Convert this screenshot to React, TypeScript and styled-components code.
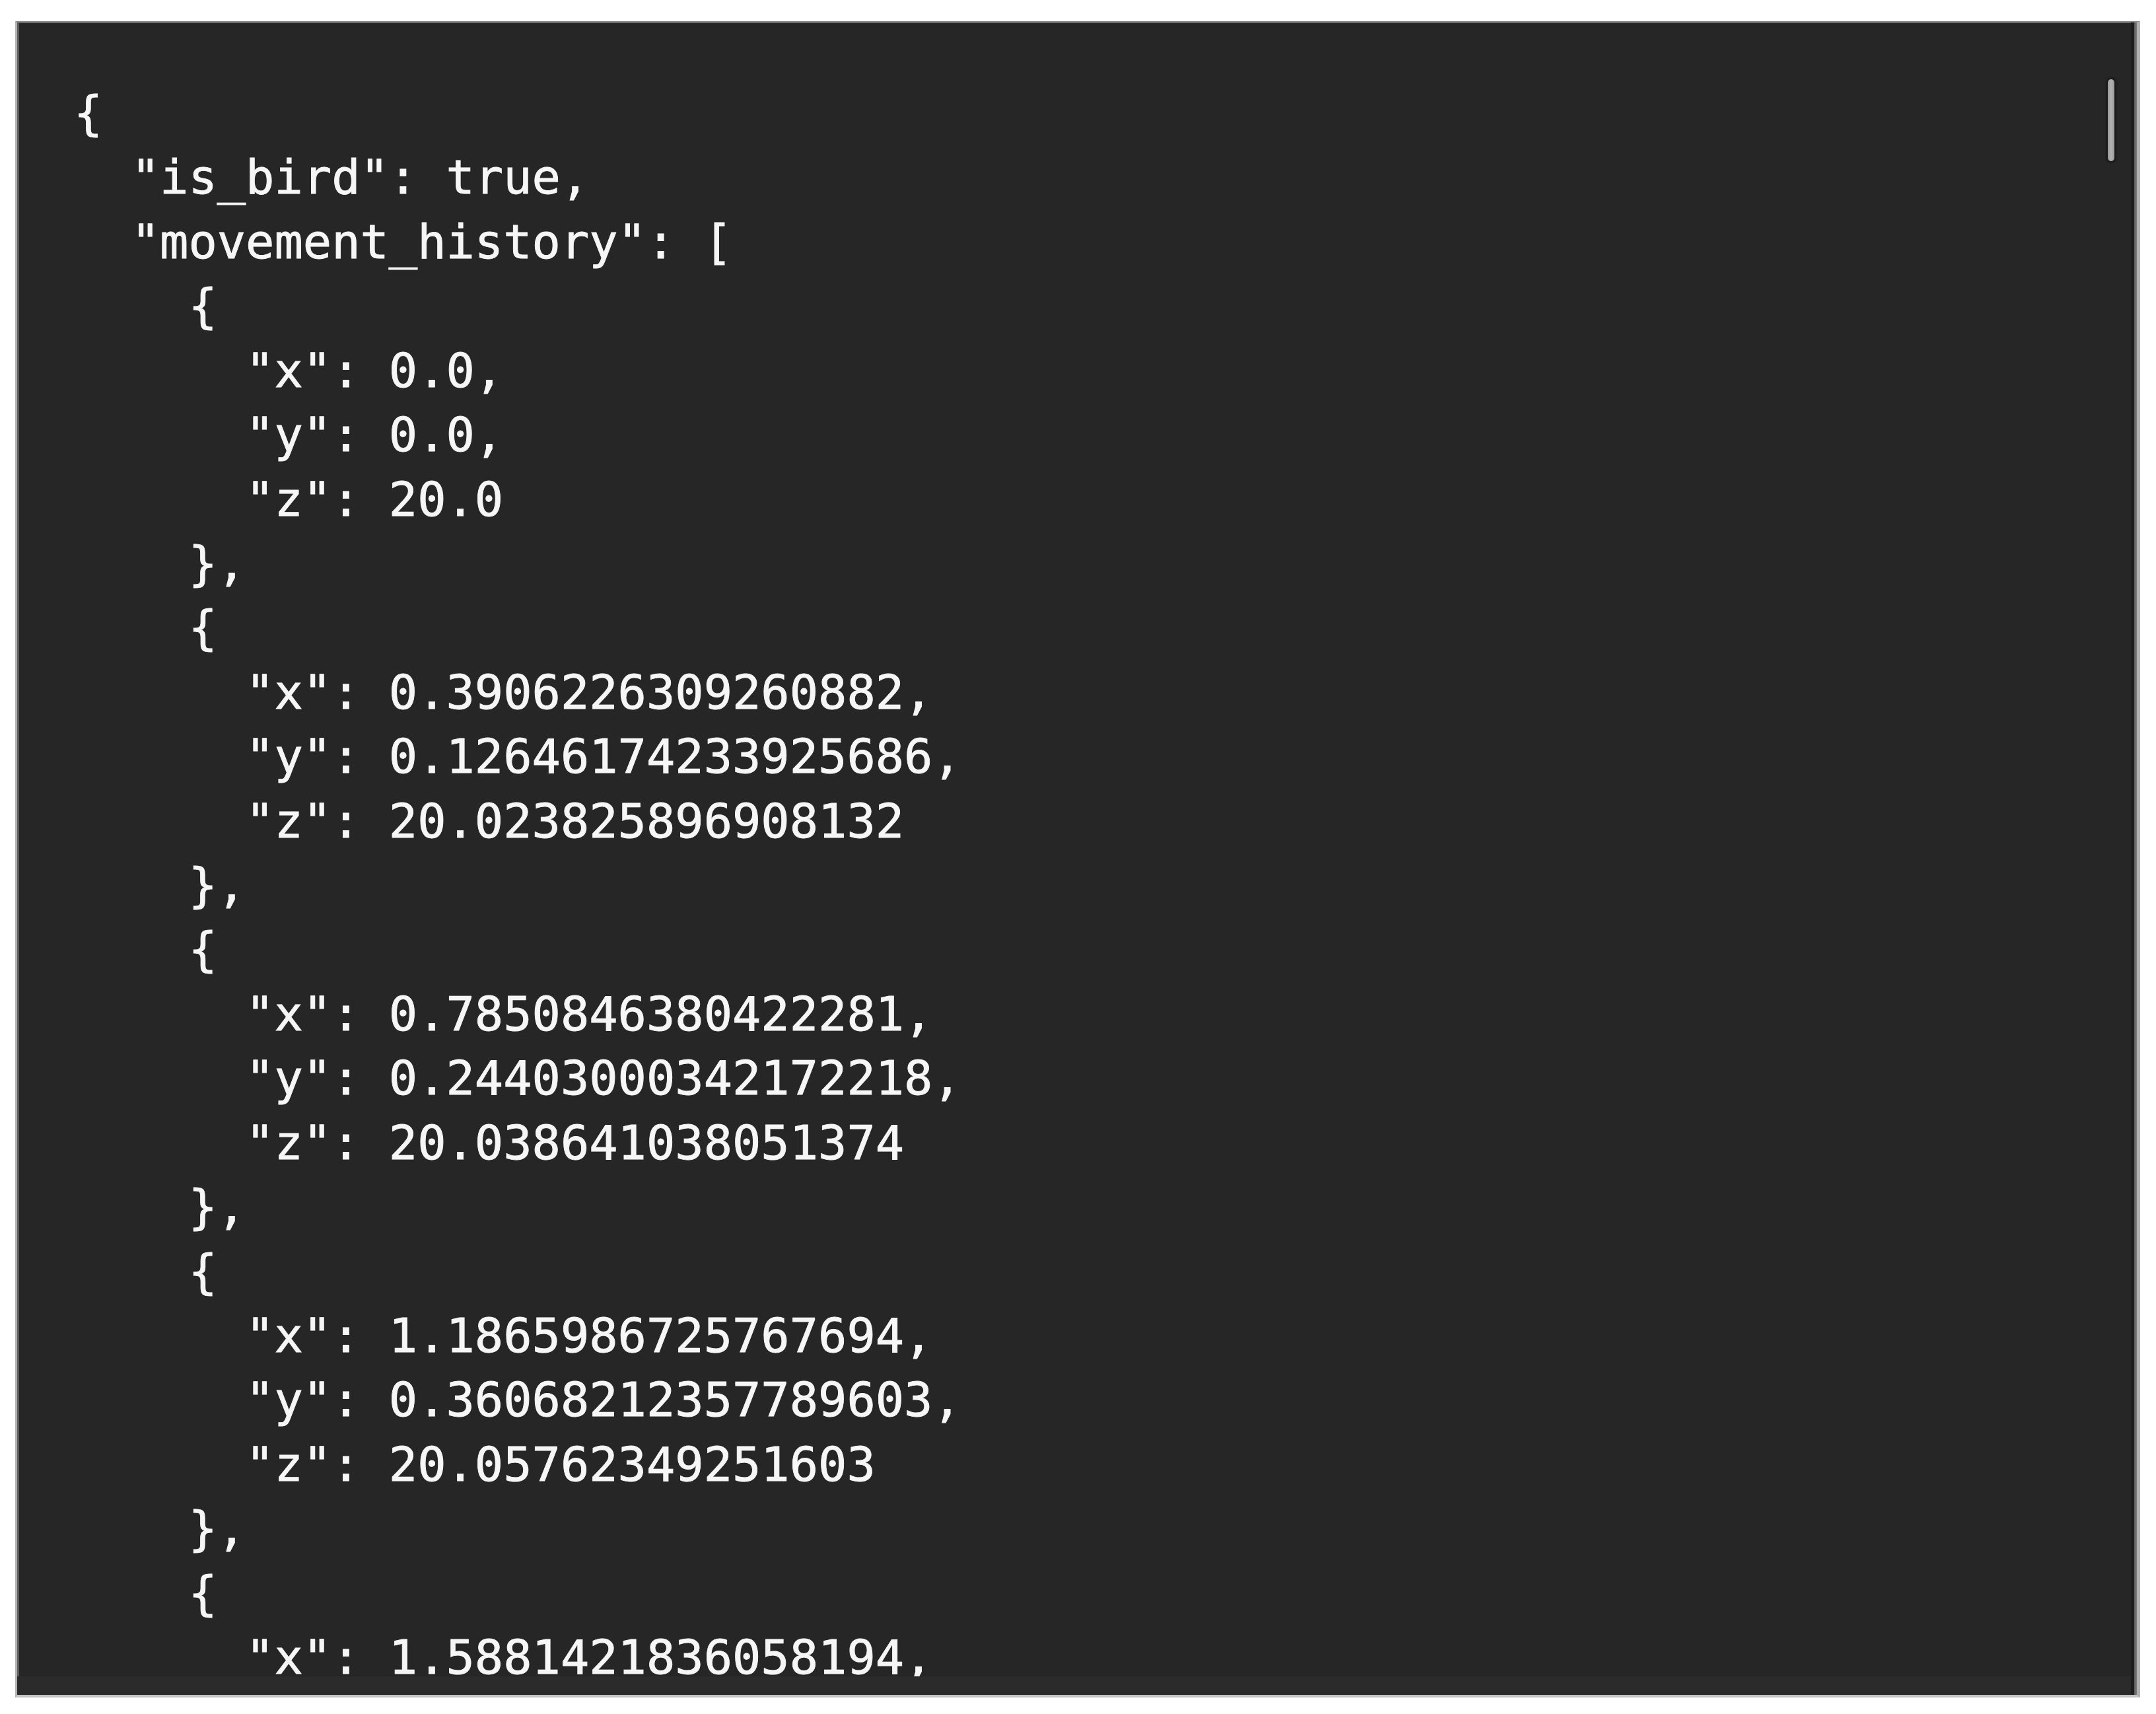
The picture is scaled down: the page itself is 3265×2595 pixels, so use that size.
import React from "react";
import styled, { createGlobalStyle } from "styled-components";

const GlobalStyle = createGlobalStyle`
  html, body {
    margin: 0;
    padding: 0;
    background: #ffffff;
  }
`;

const Page = styled.div`
  padding: 32px 0 0 23px;
`;

const Frame = styled.div`
  position: relative;
  box-sizing: border-box;
  width: 3218px;
  height: 2538px;
  display: flex;
  flex-direction: row;
  background: #262626;
  border-top: 2px solid #8c8c8c;
  border-left: 3px solid #b4b4b4;
  border-right: 5px solid #b0b0b0;
  border-bottom: 4px solid #c4c4c4;
  box-shadow: inset 3px 0 0 #5c5c5c, inset 0 1px 0 #5c5c5c;
  overflow: hidden;
`;

const Viewport = styled.div`
  flex: 1;
  min-width: 0;
  display: flex;
  flex-direction: column;
`;

const Code = styled.pre`
  flex: 1;
  min-height: 0;
  margin: 0;
  padding: 89px 0 0 86px;
  overflow: hidden;
  font-family: "DejaVu Sans Mono", "Liberation Mono", monospace;
  font-size: 72px;
  line-height: 97.43px;
  color: #f6f6f6;
  -webkit-text-stroke: 0.9px #f6f6f6;
  white-space: pre;
`;

const Line = styled.span`
  display: block;
  height: 97.43px;
`;

const HScrollTrack = styled.div`
  flex: 0 0 28px;
  background: #2b2b2b;
`;

const VScrollTrack = styled.div`
  flex: 0 0 9px;
  background: linear-gradient(to right, #1d1d1d 0, #1d1d1d 5px, #5e5e5e 5px, #7a7a7a 9px);
`;

const Thumb = styled.div`
  position: absolute;
  left: 3166px;
  top: 86px;
  width: 10px;
  height: 124px;
  border-radius: 5px;
  background: linear-gradient(to right, #9a9a9a, #b2b2b2 50%, #9a9a9a);
  box-shadow: 0 0 2px 3px #1b1b1b;
`;

const lines: string[] = [
  "{",
  '  "is_bird": true,',
  '  "movement_history": [',
  "    {",
  '      "x": 0.0,',
  '      "y": 0.0,',
  '      "z": 20.0',
  "    },",
  "    {",
  '      "x": 0.3906226309260882,',
  '      "y": 0.12646174233925686,',
  '      "z": 20.023825896908132',
  "    },",
  "    {",
  '      "x": 0.7850846380422281,',
  '      "y": 0.24403000342172218,',
  '      "z": 20.038641038051374',
  "    },",
  "    {",
  '      "x": 1.1865986725767694,',
  '      "y": 0.36068212357789603,',
  '      "z": 20.05762349251603',
  "    },",
  "    {",
  '      "x": 1.5881421836058194,',
];

export default function App() {
  return (
    <>
      <GlobalStyle />
      <Page>
        <Frame>
          <Viewport>
            <Code>
              {lines.map((l, i) => (
                <Line key={i}>{l}</Line>
              ))}
            </Code>
            <HScrollTrack />
          </Viewport>
          <VScrollTrack />
          <Thumb />
        </Frame>
      </Page>
    </>
  );
}
